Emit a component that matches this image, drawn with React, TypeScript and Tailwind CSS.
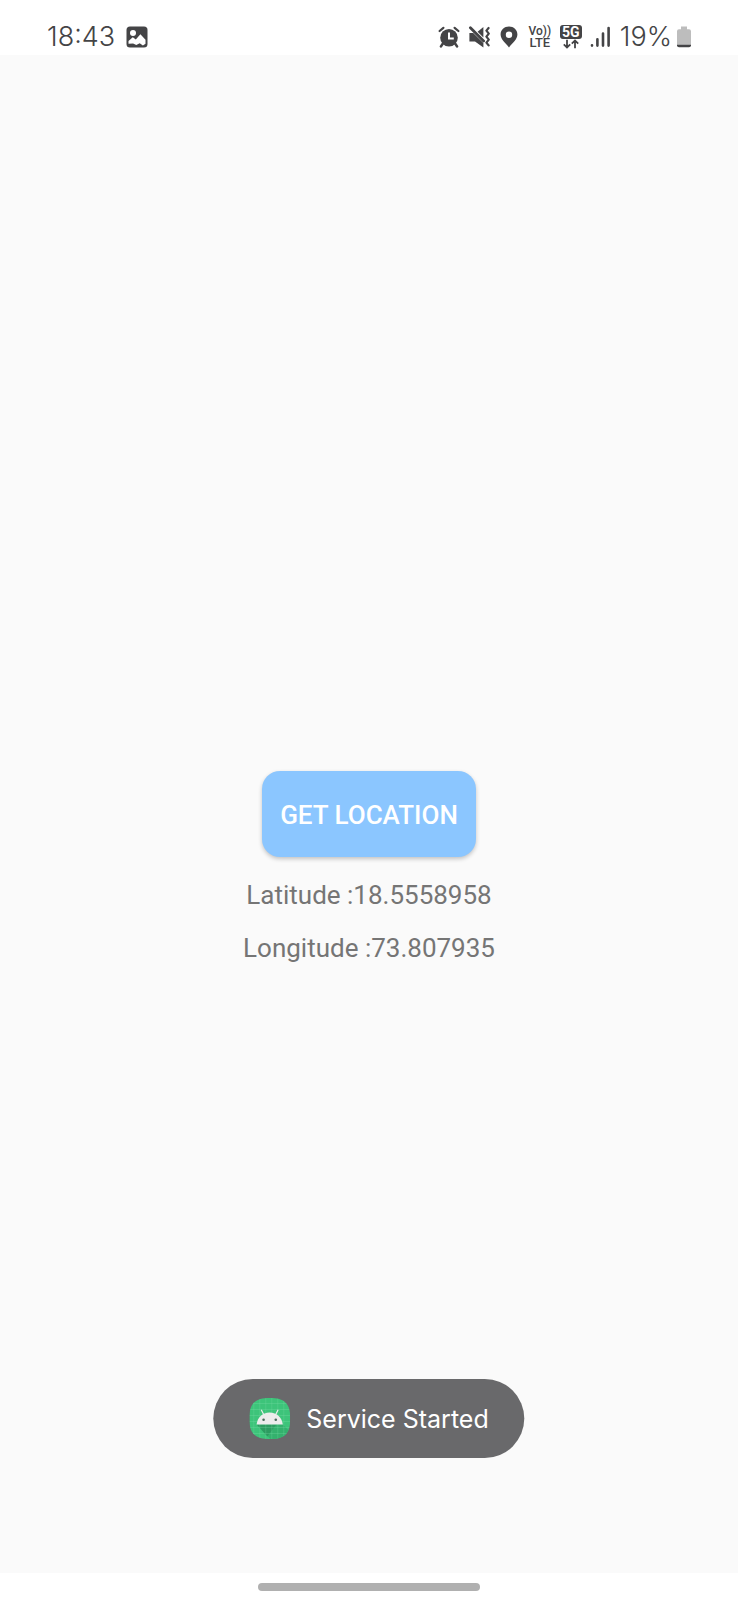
import React from "react";

function PictureIcon() {
  return (
    <svg className="size-[22px]" viewBox="0 0 22 22" aria-hidden="true">
      <rect x="0.5" y="0.5" width="21" height="21" rx="3.5" fill="#444446" />
      <circle cx="7" cy="7" r="3" fill="#fff" />
      <path d="M2.5 17.8V15l4.3-3.8 3 2.2 4.6-5.2 5.1 5.6v4l-2.6 1.6-3.2-2.2-3.4 1.8-3.2-1.6z" fill="#fff" />
    </svg>
  );
}

function AlarmIcon() {
  return (
    <svg className="size-[22px]" viewBox="0 0 22 22" fill="none" aria-hidden="true">
      <circle cx="11" cy="11.8" r="8.8" fill="#444446" />
      <path d="M1.6 5 5.4 1.8M20.4 5 16.6 1.8" stroke="#444446" strokeWidth="2.2" strokeLinecap="round" />
      <path d="M4.8 17.6 3 20.4M17.2 17.6 19 20.4" stroke="#444446" strokeWidth="2.6" strokeLinecap="round" />
      <path d="M11 6.6v5.8h4.8" stroke="#fff" strokeWidth="2" />
    </svg>
  );
}

function VibrateIcon() {
  return (
    <svg className="size-[22px]" viewBox="0 0 22 22" fill="none" aria-hidden="true">
      <path d="M1.4 7h3.8L15.4 17v4.4L7 15.4H1.4z" fill="#444446" />
      <path d="M9.6 5.8 15.4 1v10.6z" fill="#444446" />
      <path d="M2.4 1.8 15.6 15" stroke="#444446" strokeWidth="2.8" strokeLinecap="round" />
      <path d="m20.6 2-2.2 2.6 2.4 3-2.4 3 2.4 3-2.4 3 2.2 2.8" stroke="#444446" strokeWidth="2.2" strokeLinecap="round" strokeLinejoin="round" />
    </svg>
  );
}

function PinIcon() {
  return (
    <svg className="size-[22px]" viewBox="0 0 22 22" aria-hidden="true">
      <path fillRule="evenodd" d="M11 .6c-4.7 0-8.4 3.5-8.4 8 0 5 5.2 8.8 8.4 12.8 3.2-4 8.4-7.8 8.4-12.8 0-4.5-3.7-8-8.4-8zm0 4.9a3.2 3.2 0 1 1 0 6.4 3.2 3.2 0 0 1 0-6.4z" fill="#444446" />
    </svg>
  );
}

function SignalIcon() {
  return (
    <svg className="size-[22px]" viewBox="0 0 22 22" fill="none" stroke="#444446" strokeWidth="2.6" strokeLinecap="round" aria-hidden="true">
      <path d="M2 19.200v.4M7.400 13.200v6.400M13 7.600v12M18.600 2v17.600" />
    </svg>
  );
}

function BatteryIcon() {
  return (
    <svg className="h-[22px] w-4" viewBox="0 0 16 22" aria-hidden="true">
      <path d="M5 0.6h6v2.6h2a2 2 0 0 1 2 2V18H1V5.2a2 2 0 0 1 2-2h2z" fill="#bdbdbd" />
      <path d="M1 18.4h14v.8a2 2 0 0 1-2 2H3a2 2 0 0 1-2-2z" fill="#444446" />
    </svg>
  );
}

function AppIcon() {
  return (
    <svg className="size-[41px] shrink-0" viewBox="0 0 41 41" aria-hidden="true">
      <defs>
        <clipPath id="app-icon-shape">
          <path d="M20.5 0C35.500 0 41 5.500 41 20.500S35.500 41 20.500 41 0 35.500 0 20.500 5.500 0 20.500 0z" />
        </clipPath>
      </defs>
      <g clipPath="url(#app-icon-shape)">
        <path d="M0 0h41v41H0z" fill="#3dc47a" />
        <path d="M7.5 26.5 21 41h20V34L33 26z" fill="#34b16d" />
        <path d="M7.5 26.5 18 38.5 27 26.5z" fill="#2c9c60" />
        <path d="M4.5 0v41M10.5 0v41M16.5 0v41M22.5 0v41M28.5 0v41M34.5 0v41M0 5.5h41M0 11.5h41M0 17.5h41M0 23.5h41M0 29.5h41M0 35.5h41" stroke="#7be0a8" strokeOpacity=".4" strokeWidth=".7" />
      </g>
      <path d="M7.300 26.600C8 19.500 13 14.400 20.300 14.400s12.500 5.100 13.200 12.200z" fill="#ececec" />
      <path d="m14.400 16.600-2.200-4.400M26.400 16.600l2.200-4.400" stroke="#ececec" strokeWidth="1.2" strokeLinecap="round" />
      <circle cx="14.3" cy="21.8" r="1.3" fill="#4a6a5c" />
      <circle cx="26.5" cy="21.8" r="1.3" fill="#4a6a5c" />
    </svg>
  );
}

function StatusBar() {
  return (
    <header className="flex h-[55px] items-center justify-between bg-white pt-[18px] pr-[46px] pl-[47px] text-[#444446]">
      <div className="flex items-center gap-[11px]">
        <time className="font-['Inter',sans-serif] text-[27px] leading-[30px] font-light">18:43</time>
        <PictureIcon />
      </div>
      <div className="flex items-center gap-2">
        <AlarmIcon />
        <VibrateIcon />
        <PinIcon />
        <div className="flex w-6 flex-col items-center text-[12px] leading-[12px] font-medium">
          <span>Vo))</span>
          <span className="text-[13px]">LTE</span>
        </div>
        <div className="flex w-[22px] flex-col items-center">
          <span className="w-full rounded-[3px] bg-[#444446] text-center text-[14px] leading-[14px] font-bold text-white">5G</span>
          <svg className="h-[10px] w-4" viewBox="0 0 16 10" fill="none" stroke="#444446" strokeWidth="1.8" aria-hidden="true">
            <path d="M4 .8v7.600M.8 5.400 4 8.600l3.200-3.200M12 9.200V1.600M8.800 4.600 12 1.400l3.200 3.200" />
          </svg>
        </div>
        <SignalIcon />
        <div className="flex items-center gap-1">
          <span className="font-['Inter',sans-serif] text-[27px] leading-[30px] font-light">19%</span>
          <BatteryIcon />
        </div>
      </div>
    </header>
  );
}

export default function App() {
  return (
    <div className="flex min-h-screen flex-col bg-white font-['Roboto',sans-serif]">
      <StatusBar />
      <main className="relative grid flex-1 grid-rows-[1fr_auto_1fr] justify-items-center bg-[#fafafa]">
        <button
          type="button"
          className="row-start-2 rounded-[18px] bg-[#8bc6ff] px-[18px] pt-7 pb-[26px] text-[26px] leading-8 font-medium text-white shadow-[0_2px_4px_rgba(0,0,0,0.22)]"
        >
          GET LOCATION
        </button>
        <div className="row-start-3 flex flex-col items-center gap-[21px] pt-[22px] text-[26px] leading-8 text-[#757575]">
          <p>Latitude :18.5558958</p>
          <p>Longitude :73.807935</p>
        </div>
        <div
          role="status"
          className="absolute bottom-[115px] left-1/2 flex -translate-x-1/2 items-center gap-4 rounded-full bg-[#69696b] px-9 py-[19px] font-['Inter',sans-serif] text-[25px] leading-8 whitespace-nowrap text-white"
        >
          <AppIcon />
          <span>Service Started</span>
        </div>
      </main>
      <footer className="flex h-[27px] items-center justify-center bg-white">
        <div className="h-2 w-[30%] rounded-full bg-[#b0b0b0]" />
      </footer>
    </div>
  );
}
